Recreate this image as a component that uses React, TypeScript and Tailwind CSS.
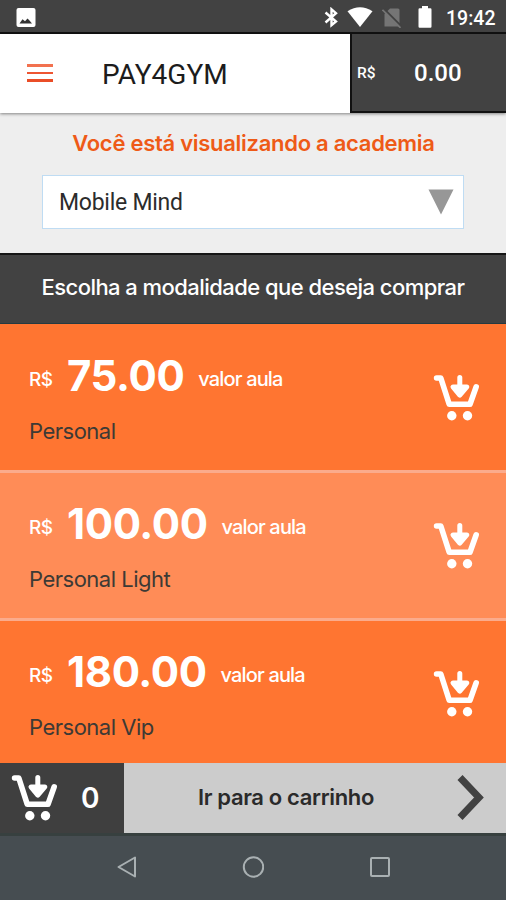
import { useState } from 'react';

// ============================================================================
// Types
// ============================================================================

interface Plan {
  id: string;
  name: string;
  price: number;
}

// ============================================================================
// Constants
// ============================================================================

const PLANS: Plan[] = [
  { id: 'personal', name: 'Personal', price: 75 },
  { id: 'personal-light', name: 'Personal Light', price: 100 },
  { id: 'personal-vip', name: 'Personal Vip', price: 180 },
];

// ============================================================================
// Icons
// ============================================================================

function CartIcon() {
  return (
    <svg width="48" height="48" viewBox="0 0 48 48" className="shrink-0" fill="none" aria-hidden="true">
      <path
        d="M4.6 4H8.8L17.2 30.2H38L44.2 12.8"
        stroke="currentColor"
        strokeWidth="5.6"
        strokeLinecap="round"
        strokeLinejoin="round"
      />
      <path
        d="M27.8 3.5V13M21 13H34.8L27.8 21.2Z"
        fill="currentColor"
        stroke="currentColor"
        strokeWidth="5"
        strokeLinecap="round"
        strokeLinejoin="round"
      />
      <circle cx="19.8" cy="41.8" r="4.7" fill="currentColor" />
      <circle cx="35.5" cy="41.8" r="4.7" fill="currentColor" />
    </svg>
  );
}

function StatusBar() {
  return (
    <div className="flex h-[34px] items-center border-b-2 border-[#111] bg-[#424242] pl-4 pr-[10px] text-white">
      <svg width="20" height="20" viewBox="0 0 20 20" className="mt-[3px]" aria-hidden="true">
        <rect x="0.5" y="0" width="19" height="19" rx="2" fill="#fff" />
        <path d="M3.5 15.5L6.5 11.2L9 13.2L11.5 10.5L13.5 12.5L16 15.5Z" fill="#333" />
      </svg>
      <svg
        width="14"
        height="21"
        viewBox="0 0 14 21"
        className="ml-auto mt-[3px]"
        fill="none"
        stroke="#fff"
        strokeWidth="2.4"
        aria-hidden="true"
      >
        <path d="M1.5 5.5L12 14.5L7.5 18.2V2.3L12 6.2L1.5 15.5" />
      </svg>
      <svg width="26" height="21" viewBox="0 0 26 21" className="ml-[9px] mt-[3px]" aria-hidden="true">
        <path d="M0.5 4.2Q13 -3.8 25.5 4.2L13 20Z" fill="#fff" />
      </svg>
      <svg width="20" height="20" viewBox="0 0 20 20" className="ml-[9px] mt-[3px]" aria-hidden="true">
        <path d="M8 0.5H16Q17.5 0.5 17.5 2V18.5H2.5V6Z" fill="#757575" />
        <path d="M1.8 0.8L19.3 18.3" stroke="#424242" strokeWidth="2" />
        <path d="M0.5 1.8L18.5 19.8" stroke="#757575" strokeWidth="1.8" />
      </svg>
      <svg width="14" height="22" viewBox="0 0 14 22" className="ml-4 mt-[2px]" aria-hidden="true">
        <path
          d="M4 0H10V2.2H12.4Q13.5 2.2 13.5 3.4V20.6Q13.5 21.8 12.4 21.8H1.6Q0.5 21.8 0.5 20.6V3.4Q0.5 2.2 1.6 2.2H4Z"
          fill="#fff"
        />
      </svg>
      <span className="ml-[14px] mt-[5px] w-[50px] whitespace-nowrap font-['Roboto',sans-serif] text-[19.5px] font-medium leading-none">
        19:42
      </span>
    </div>
  );
}

function AppHeader({ total }: { total: number }) {
  return (
    <header className="relative z-10 flex h-[79px] font-['Roboto',sans-serif] shadow-[0_1px_3px_rgba(0,0,0,0.45)]">
      <div className="flex w-[352px] items-center border-r-2 border-[#111] bg-white pl-[27px]">
        <button type="button" aria-label="Menu" className="flex flex-col gap-[5px] pb-px">
          <span className="h-[3px] w-[26px] bg-[#f2714f]" />
          <span className="h-[2px] w-[26px] bg-[#ee5532]" />
          <span className="h-[3px] w-[26px] bg-[#ea4d27]" />
        </button>
        <h1 className="ml-[49px] mt-[3px] text-[28px] leading-none text-[#1c1c1c]">PAY4GYM</h1>
      </div>
      <div className="flex flex-1 items-center border-b-2 border-[#111] bg-[#424242] text-white">
        <span className="ml-[5px] mt-[2px] w-[20px] whitespace-nowrap text-[15.5px] font-medium leading-none">R$</span>
        <span className="ml-[37px] mt-px text-[24px] font-medium leading-none">{total.toFixed(2)}</span>
      </div>
    </header>
  );
}

function GymPicker() {
  return (
    <section className="h-[140px] bg-[#eeeeee] pt-4">
      <p className="pl-px text-center text-[22px] font-semibold leading-7 tracking-[-0.28px] text-[#ee5a17]">
        Você está visualizando a academia
      </p>
      <button
        type="button"
        className="mx-auto mt-[18px] flex h-[54px] w-[422px] items-center justify-between border border-[#bfdcf3] bg-white pl-4 pr-[9px] font-['Roboto',sans-serif] text-[23px] tracking-[-0.25px] text-[#2c2c2c]"
      >
        <span className="pt-[3px]">Mobile Mind</span>
        <svg width="26" height="26" viewBox="0 0 26 26" aria-hidden="true">
          <path d="M0.5 0.5H25.5L13 25.5Z" fill="#979797" />
        </svg>
      </button>
    </section>
  );
}

function PlanRow({ plan, tinted, onAdd }: { plan: Plan; tinted: boolean; onAdd: () => void }) {
  return (
    <li
      className={`flex h-[148px] shrink-0 justify-between border-b-[3px] border-[#fbab8c] pl-[29px] pr-[26px] ${
        tinted ? 'bg-[#ff8c57]' : 'bg-[#ff7531]'
      }`}
    >
      <div className="pt-[25px]">
        <div className="flex items-center whitespace-nowrap text-white">
          <span className="mt-[6px] w-[38px] text-[19px] font-medium leading-none tracking-[-0.5px]">R$</span>
          <span className="text-[42px] font-bold leading-[52px] tracking-[-0.4px]">{plan.price.toFixed(2)}</span>
          <span className="ml-[14px] mt-[5px] text-[20px] font-medium leading-none tracking-[-0.85px]">
            valor aula
          </span>
        </div>
        <p className="mt-[14px] text-[22px] leading-[30px] tracking-[-0.5px] text-[#3d3a35]">{plan.name}</p>
      </div>
      <button type="button" aria-label="Adicionar" onClick={onAdd} className="mt-[49px] self-start text-white">
        <CartIcon />
      </button>
    </li>
  );
}

function CartBar({ count }: { count: number }) {
  return (
    <div className="flex h-[73px] border-b-[3px] border-[#37403f]">
      <div className="flex w-[124px] items-center bg-[#3f3f3f] pl-[10px] text-white">
        <CartIcon />
        <span className="ml-[23px] text-[28px] font-semibold leading-none">{count}</span>
      </div>
      <button type="button" className="flex flex-1 items-center bg-[#cccccc] pb-[2px] pl-[74px] pr-[22px] text-[#2a2a2a]">
        <span className="whitespace-nowrap text-[22px] font-semibold leading-none tracking-[-0.35px]">
          Ir para o carrinho
        </span>
        <svg width="28" height="46" viewBox="0 0 28 46" className="ml-auto" fill="none" aria-hidden="true">
          <path d="M4 3.5L23 23.5L4 43.5" stroke="#424242" strokeWidth="7" />
        </svg>
      </button>
    </div>
  );
}

function NavBar() {
  return (
    <nav className="flex h-[64px] items-center justify-center gap-[104px] bg-[#464d51] pb-[2px] text-[#a9b0b2]">
      <svg width="22" height="22" viewBox="0 0 22 22" fill="none" stroke="currentColor" strokeWidth="2" aria-hidden="true">
        <path d="M19 1.5V20.5L2.5 11Z" strokeLinejoin="round" />
      </svg>
      <svg width="22" height="22" viewBox="0 0 22 22" fill="none" stroke="currentColor" strokeWidth="2" aria-hidden="true">
        <circle cx="11.5" cy="11" r="9.7" />
      </svg>
      <svg width="22" height="22" viewBox="0 0 22 22" fill="none" stroke="currentColor" strokeWidth="2" aria-hidden="true">
        <rect x="3" y="2" width="18" height="18" rx="1" />
      </svg>
    </nav>
  );
}

// ============================================================================
// Main component
// ============================================================================

export default function App() {
  const [cart, setCart] = useState<Plan[]>([]);
  const total = cart.reduce((sum, plan) => sum + plan.price, 0);

  return (
    <div className="flex h-[900px] w-[506px] flex-col overflow-hidden bg-[#464d51] font-['Inter',sans-serif]">
      <StatusBar />
      <AppHeader total={total} />
      <GymPicker />
      <h2 className="flex h-[71px] shrink-0 items-center justify-center whitespace-nowrap border-b border-t-2 border-b-[#263a40] border-t-[#161616] bg-[#424242] pb-[3px] text-[22px] font-medium tracking-[-0.55px] text-white">
        Escolha a modalidade que deseja comprar
      </h2>
      <ul className="flex h-[439px] shrink-0 flex-col overflow-hidden bg-[#ff7531] pt-px">
        {PLANS.map((plan, index) => (
          <PlanRow
            key={plan.id}
            plan={plan}
            tinted={index % 2 === 1}
            onAdd={() => setCart((items) => [...items, plan])}
          />
        ))}
      </ul>
      <CartBar count={cart.length} />
      <NavBar />
    </div>
  );
}
